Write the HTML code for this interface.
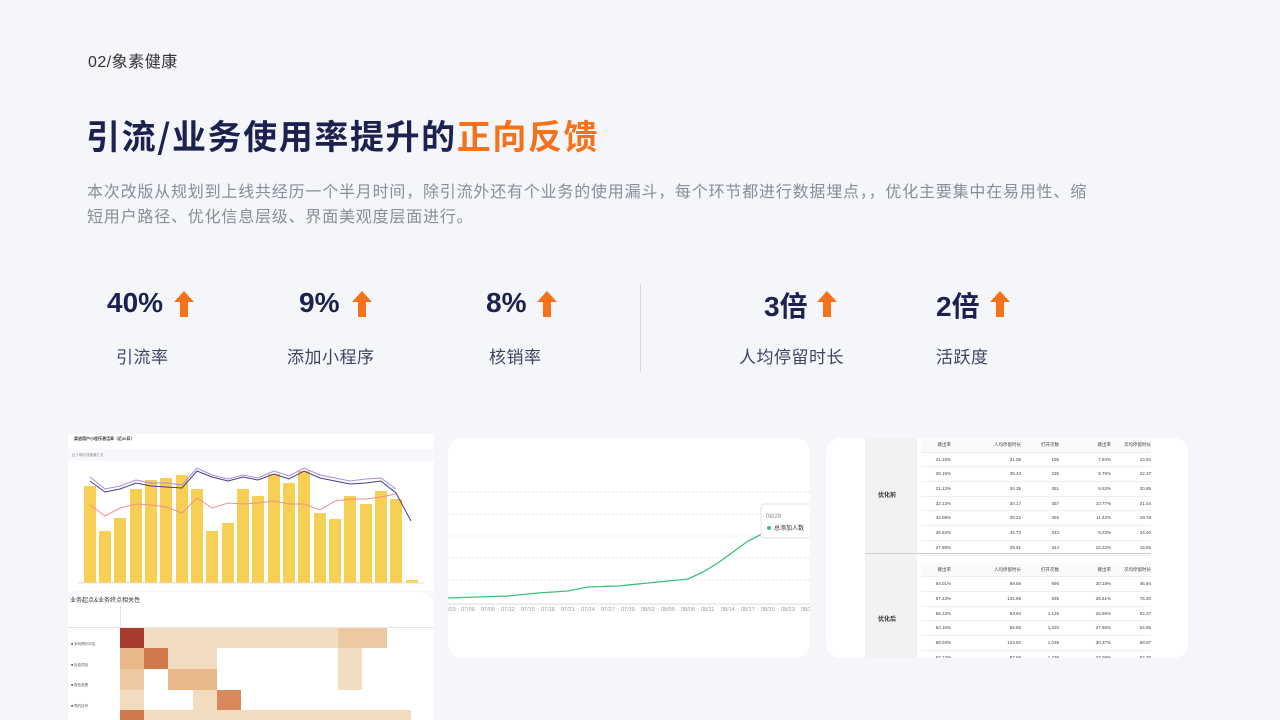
<!DOCTYPE html>
<html><head><meta charset="utf-8"><style>
*{margin:0;padding:0;box-sizing:border-box}
body{width:1280px;height:720px;overflow:hidden;background:#f5f6fa;font-family:"Liberation Sans","Noto Sans CJK SC",sans-serif;position:relative}
.a{position:absolute}
.num{font-weight:bold;font-size:28px;color:#1c2150;top:287px}
.lab{font-size:17px;color:#3f4463;top:343px;letter-spacing:0.5px}
.arr{width:22px;height:28px;top:290px}
.card{background:#fff;border-radius:14px}
.bar{position:absolute;bottom:0;width:12px;background:#f7cf55}
.g{display:grid;grid-template-columns:30px 70px 38px 52px 40px;text-align:right;border-bottom:1px solid #eee;height:14.7px}
</style></head><body>
<div class="a" style="left:88px;top:48px;font-size:16px;color:#333;letter-spacing:0.5px">02/象素健康</div>
<div class="a" style="left:86px;top:110px;font-size:34px;font-weight:bold;color:#1c2150;letter-spacing:1.6px;font-family:'Noto Sans CJK SC',sans-serif">引流/业务使用率提升的<span style="color:#f5721a">正向反馈</span></div>
<div class="a" style="left:87px;top:180px;width:1012px;font-size:16px;line-height:25px;color:#8a8d99;letter-spacing:0.8px">本次改版从规划到上线共经历一个半月时间，除引流外还有个业务的使用漏斗，每个环节都进行数据埋点，，优化主要集中在易用性、缩短用户路径、优化信息层级、界面美观度层面进行。</div>

<div class="a num" style="left:107px">40%</div>
<svg class="a arr" style="left:173px" viewBox="0 0 22 28"><path d="M11 1L21 12H15V27H7V12H1Z" fill="#f5721a"/></svg>
<div class="a lab" style="left:116px">引流率</div>
<div class="a num" style="left:299px">9%</div>
<svg class="a arr" style="left:351px" viewBox="0 0 22 28"><path d="M11 1L21 12H15V27H7V12H1Z" fill="#f5721a"/></svg>
<div class="a lab" style="left:287px">添加小程序</div>
<div class="a num" style="left:486px">8%</div>
<svg class="a arr" style="left:536px" viewBox="0 0 22 28"><path d="M11 1L21 12H15V27H7V12H1Z" fill="#f5721a"/></svg>
<div class="a lab" style="left:489px">核销率</div>
<div class="a" style="left:640px;top:284px;width:1px;height:88px;background:#d8d9de"></div>
<div class="a num" style="left:764px;top:285px">3倍</div>
<svg class="a arr" style="left:816px" viewBox="0 0 22 28"><path d="M11 1L21 12H15V27H7V12H1Z" fill="#f5721a"/></svg>
<div class="a lab" style="left:739px">人均停留时长</div>
<div class="a num" style="left:936px;top:285px">2倍</div>
<svg class="a arr" style="left:989px" viewBox="0 0 22 28"><path d="M11 1L21 12H15V27H7V12H1Z" fill="#f5721a"/></svg>
<div class="a lab" style="left:936px">活跃度</div>

<!-- left card -->
<div class="a" style="left:68px;top:434px;width:366px;height:286px;background:#f7f8fb;overflow:hidden">
 <div class="a" style="left:0;top:0;width:366px;height:15px;background:#fff"></div>
 <div class="a" style="left:6px;top:2px;font-size:4px;color:#333;font-weight:bold">渠道用户小程序激活率（近20日）</div>
 <div class="a" style="left:4px;top:19px;font-size:3.5px;color:#888">近十期引流渠道汇总</div>
 <div class="a" style="left:0;top:27px;width:366px;height:130px;background:#fff">
  <div class="a" style="left:0;top:0;width:366px;height:122px">
   <div class="bar" style="left:16px;height:97px"></div><div class="bar" style="left:31px;height:52px"></div><div class="bar" style="left:46px;height:65px"></div><div class="bar" style="left:62px;height:94px"></div><div class="bar" style="left:77px;height:103px"></div><div class="bar" style="left:92px;height:105px"></div><div class="bar" style="left:108px;height:108px"></div><div class="bar" style="left:123px;height:94px"></div><div class="bar" style="left:138px;height:52px"></div><div class="bar" style="left:154px;height:60px"></div><div class="bar" style="left:169px;height:94px"></div><div class="bar" style="left:184px;height:87px"></div><div class="bar" style="left:200px;height:109px"></div><div class="bar" style="left:215px;height:100px"></div><div class="bar" style="left:230px;height:112px"></div><div class="bar" style="left:246px;height:70px"></div><div class="bar" style="left:261px;height:64px"></div><div class="bar" style="left:276px;height:87px"></div><div class="bar" style="left:292px;height:79px"></div><div class="bar" style="left:307px;height:92px"></div><div class="bar" style="left:322px;height:84px"></div><div class="bar" style="left:338px;height:3px"></div>
  </div>
  <svg class="a" style="left:0;top:0" width="366" height="130"><polyline fill="none" stroke="#4a3a8c" stroke-width="1" points="22,20 37,31 52,28 68,22 83,25 98,26 114,27 129,10 144,16 160,20 175,16 190,19 206,13 221,18 236,10 252,17 267,20 282,23 298,22 313,20 328,32 343,60"/><polyline fill="none" stroke="#a98be0" stroke-width="1" points="22,16 37,28 52,25 68,19 83,22 98,22 114,24 129,7 144,14 160,18 175,14 190,17 206,10 221,15 236,7 252,14 267,17 282,20 298,18 313,17 328,28"/><polyline fill="none" stroke="#f29090" stroke-width="1" points="22,44 37,55 52,47 68,43 83,44 98,46 114,52 129,37 144,47 160,42 175,43 190,42 206,40 221,43 236,43 252,49 267,40 282,38 298,38 313,36 328,33"/><line x1="10" y1="122" x2="356" y2="122" stroke="#ddd"/></svg>
 </div>
 <div class="a" style="left:0;top:158px;width:366px;height:130px;background:#fff;border-radius:14px 14px 0 0">
  <div class="a" style="left:2px;top:3px;font-size:6px;color:#333">业务起点&业务终点相关性</div>
  <div class="a" style="left:52px;top:14px;width:1px;height:116px;background:#e5e5e5"></div>
  <div class="a" style="left:0;top:35px;width:366px;height:1px;background:#e5e5e5"></div>
  <div class="a" style="left:52px;top:36px;width:24px;height:20px;background:#a83a2e"></div>
  <div class="a" style="left:76px;top:36px;width:97px;height:20px;background:#f2dcc0"></div>
  <div class="a" style="left:173px;top:36px;width:97px;height:20px;background:#f2dcc0"></div>
  <div class="a" style="left:270px;top:36px;width:49px;height:20px;background:#ecc9a0"></div>
  <div class="a" style="left:52px;top:56px;width:24px;height:21px;background:#e8b78a"></div>
  <div class="a" style="left:76px;top:56px;width:24px;height:21px;background:#cf7a4c"></div>
  <div class="a" style="left:100px;top:56px;width:49px;height:21px;background:#f2dcc0"></div>
  <div class="a" style="left:270px;top:56px;width:24px;height:21px;background:#f2dcc0"></div>
  <div class="a" style="left:52px;top:77px;width:24px;height:21px;background:#ecc9a0"></div>
  <div class="a" style="left:100px;top:77px;width:49px;height:21px;background:#e8b78a"></div>
  <div class="a" style="left:270px;top:77px;width:24px;height:21px;background:#f2dcc0"></div>
  <div class="a" style="left:52px;top:98px;width:24px;height:20px;background:#f2dcc0"></div>
  <div class="a" style="left:125px;top:98px;width:24px;height:20px;background:#f2dcc0"></div>
  <div class="a" style="left:149px;top:98px;width:24px;height:20px;background:#d8885a"></div>
  <div class="a" style="left:52px;top:118px;width:24px;height:12px;background:#cf7a4c"></div>
  <div class="a" style="left:76px;top:118px;width:97px;height:12px;background:#f2dcc0"></div>
  <div class="a" style="left:173px;top:118px;width:170px;height:12px;background:#f2dcc0"></div>
  <div class="a" style="left:3px;top:42px;font-size:3.5px;color:#555;line-height:20.5px">■ 本科预约评估<br>■ 检查项目<br>■ 报告查看<br>■ 预约挂号<br>■ 其他</div>
 </div>
</div>

<!-- middle card -->
<div class="a card" style="left:448px;top:438px;width:362px;height:220px;overflow:hidden">
 <svg width="362" height="220"><g stroke="#e6e8ee" stroke-dasharray="2,2"><line x1="0" y1="54" x2="362" y2="54"/><line x1="0" y1="76" x2="362" y2="76"/><line x1="0" y1="98" x2="362" y2="98"/><line x1="0" y1="120" x2="362" y2="120"/><line x1="0" y1="142" x2="362" y2="142"/></g><line x1="0" y1="166" x2="362" y2="166" stroke="#ddd"/>
 <polyline fill="none" stroke="#3cc17a" stroke-width="1.3" points="0,160 30,159 60,158 90,155 120,153 140,149 170,148 200,145 240,141 255,134 270,125 285,114 300,103 314,96 330,86 362,72"/>
 <g font-size="5.5" fill="#999" font-family="Liberation Sans"><text x="0" y="173">/03</text><text x="13" y="173">07/06</text><text x="33" y="173">07/09</text><text x="53" y="173">07/12</text><text x="73" y="173">07/15</text><text x="93" y="173">07/18</text><text x="113" y="173">07/21</text><text x="133" y="173">07/24</text><text x="153" y="173">07/27</text><text x="173" y="173">07/30</text><text x="193" y="173">08/02</text><text x="213" y="173">08/05</text><text x="233" y="173">08/08</text><text x="253" y="173">08/11</text><text x="273" y="173">08/14</text><text x="293" y="173">08/17</text><text x="313" y="173">08/20</text><text x="333" y="173">08/23</text><text x="353" y="173">08/2</text></g>
 <rect x="313" y="66" width="60" height="34" rx="3" fill="#fff" stroke="#e3e3e3"/><text x="318" y="80" font-size="6" fill="#888">08/29</text><circle cx="321" cy="90" r="2" fill="#3cc17a"/><text x="326" y="92" font-size="6" fill="#333">总添加人数</text></svg>
</div>

<!-- right card -->
<div class="a card" style="left:826px;top:438px;width:362px;height:220px;overflow:hidden">
 <div class="a" style="left:39px;top:0;width:52px;height:220px;background:#f2f2f3"></div>
 <div class="a" style="left:39px;top:115px;width:286px;height:1px;background:#ccc"></div>
 <div class="a" style="left:52px;top:52px;font-size:6px;font-weight:bold;color:#333">优化前</div>
 <div class="a" style="left:52px;top:176px;font-size:6px;font-weight:bold;color:#333">优化后</div>
 <div class="a" style="left:95px;top:0;width:230px;font-size:4.5px;color:#444;line-height:14.7px">
  <div class="g" style="background:#fafafa"><span>跳出率</span><span>人均停留时长</span><span>打开次数</span><span>跳出率</span><span>次均停留时长</span></div>
  <div class="g"><span>21.19%</span><span>31.05</span><span>196</span><span>7.84%</span><span>23.92</span></div>
  <div class="g"><span>28.15%</span><span>39.43</span><span>236</span><span>8.79%</span><span>22.37</span></div>
  <div class="g"><span>21.13%</span><span>34.35</span><span>351</span><span>8.53%</span><span>20.85</span></div>
  <div class="g"><span>32.13%</span><span>30.17</span><span>357</span><span>10.77%</span><span>21.04</span></div>
  <div class="g"><span>32.08%</span><span>29.22</span><span>355</span><span>11.42%</span><span>19.76</span></div>
  <div class="g"><span>28.63%</span><span>34.72</span><span>343</span><span>9.23%</span><span>24.40</span></div>
  <div class="g"><span>27.88%</span><span>29.91</span><span>344</span><span>10.22%</span><span>19.65</span></div>
  <div style="height:7px"></div>
  <div class="g" style="background:#fafafa"><span>跳出率</span><span>人均停留时长</span><span>打开次数</span><span>跳出率</span><span>次均停留时长</span></div>
  <div class="g"><span>64.01%</span><span>69.56</span><span>695</span><span>30.18%</span><span>46.94</span></div>
  <div class="g"><span>67.43%</span><span>134.69</span><span>935</span><span>26.61%</span><span>75.20</span></div>
  <div class="g"><span>66.13%</span><span>93.94</span><span>1,125</span><span>26.65%</span><span>52.27</span></div>
  <div class="g"><span>63.16%</span><span>94.65</span><span>1,020</span><span>27.66%</span><span>54.86</span></div>
  <div class="g"><span>68.03%</span><span>123.92</span><span>1,036</span><span>30.37%</span><span>69.97</span></div>
  <div class="g"><span>67.17%</span><span>97.68</span><span>1,236</span><span>27.39%</span><span>52.30</span></div>
 </div>
</div>
</body></html>
